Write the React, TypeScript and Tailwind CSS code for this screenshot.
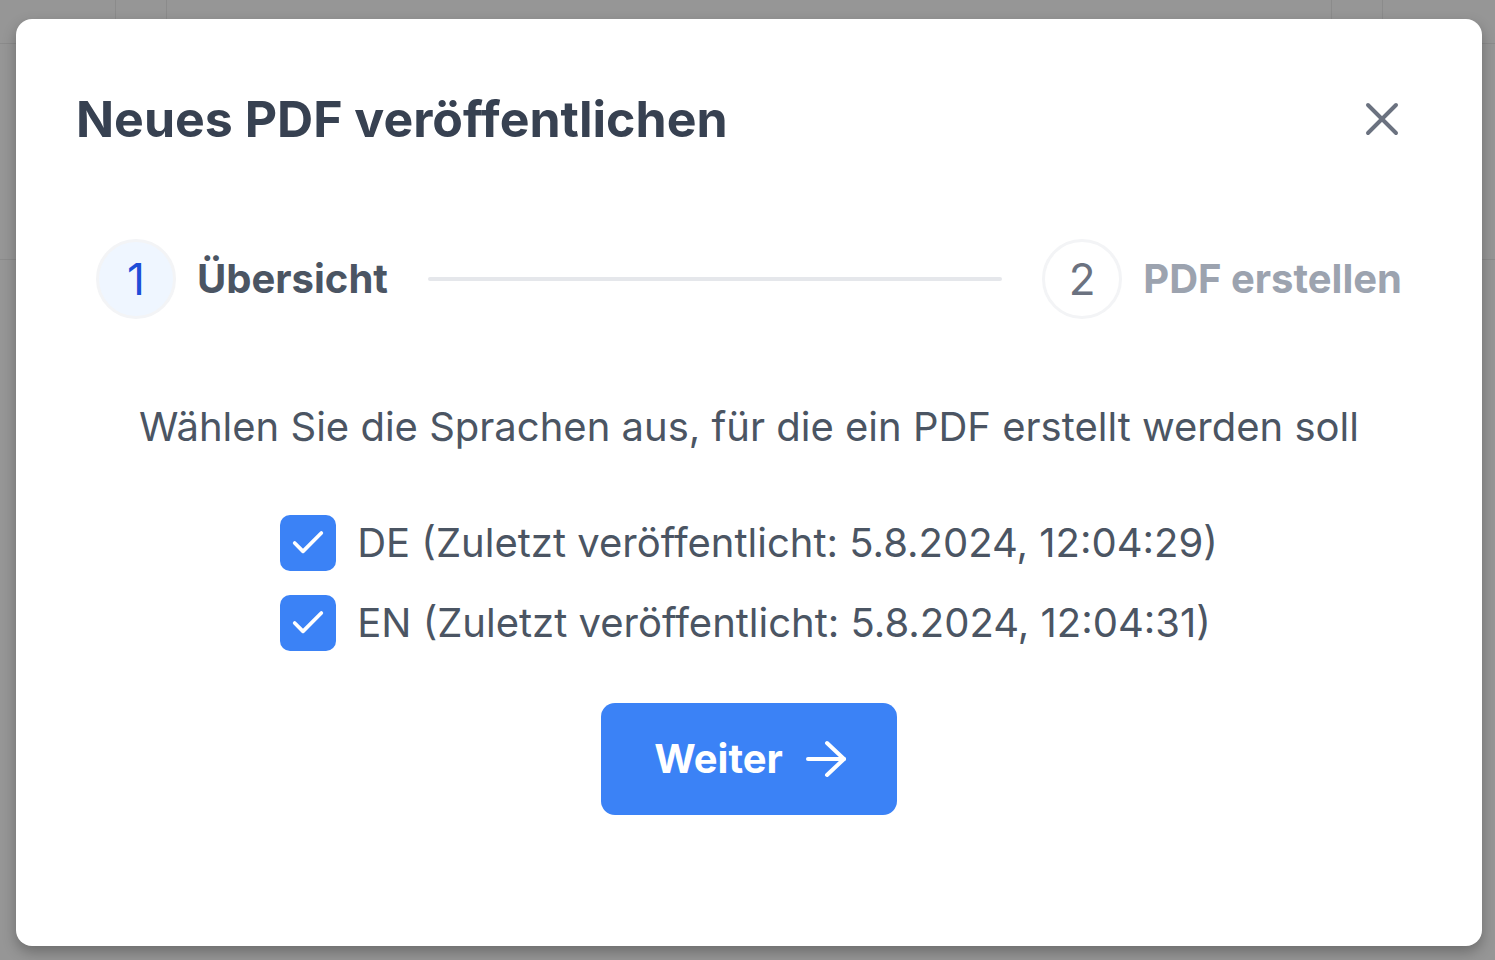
import React, { useState } from 'react';
import { X, Check } from 'lucide-react';

const languages = [
  { code: 'DE', published: '5.8.2024, 12:04:29' },
  { code: 'EN', published: '5.8.2024, 12:04:31' },
];

function Backdrop() {
  // page behind the dialog, dimmed
  return (
    <div className="fixed inset-0 flex flex-col bg-[#969696]">
      <div className="flex h-[44px] border-b border-[#8b8b8b]">
        <div className="w-[116px] border-r border-[#8b8b8b]" />
        <div className="w-[51px] border-r border-[#8b8b8b]" />
        <div className="flex-1 border-r border-[#8b8b8b]" />
        <div className="w-[51px] border-r border-[#8b8b8b]" />
        <div className="w-[112px]" />
      </div>
      <div className="h-[216px] border-b border-[#8b8b8b]" />
      <div className="flex-1" />
    </div>
  );
}

function Arrow() {
  return (
    <svg width="42" height="38" viewBox="0 0 42 38" fill="none" stroke="currentColor" strokeWidth="4" strokeLinecap="round" strokeLinejoin="round">
      <path d="M3 19h36" />
      <path d="M22 3l17 16-17 16" />
    </svg>
  );
}

export default function App() {
  const [selected, setSelected] = useState<string[]>(['DE', 'EN']);

  const toggle = (code: string) =>
    setSelected((s) => (s.includes(code) ? s.filter((c) => c !== code) : [...s, code]));

  return (
    <div className="h-screen w-full font-['Inter',sans-serif]">
      <Backdrop />

      {/* Dialog */}
      <div className="fixed inset-0 flex items-start pl-[16px] pt-[19px]">
        <div className="w-[1466px] rounded-2xl bg-white px-[60px] pt-[68px] pb-[131px] shadow-[0_6px_14px_rgba(0,0,0,0.28)]">
          <div className="flex h-[64px] items-center justify-between">
            <h2 className="text-[50px] font-bold leading-[64px] text-[#374151]">Neues PDF veröffentlichen</h2>
            <button className="mr-[12px] text-[#6b7280]">
              <X size={56} strokeWidth={1.7} />
            </button>
          </div>

          {/* Stepper */}
          <div className="mt-[88px] flex items-center px-[20px]">
            <div className="flex items-center gap-[21px]">
              <div className="flex h-[80px] w-[80px] items-center justify-center rounded-full border-[3px] border-[#f3f4f6] bg-[#eff6ff] text-[44px] text-[#1d4ed8]">
                1
              </div>
              <span className="text-[40px] font-bold text-[#4b5563]">Übersicht</span>
            </div>
            <div className="mx-[40px] h-[4px] flex-1 rounded-full bg-[#e5e7eb]" />
            <div className="flex items-center gap-[21px]">
              <div className="flex h-[80px] w-[80px] items-center justify-center rounded-full border-[3px] border-[#f3f4f6] bg-white text-[44px] text-[#6b7280]">
                2
              </div>
              <span className="text-[40px] font-bold text-[#9ca3af]">PDF erstellen</span>
            </div>
          </div>

          <p className="mt-[80px] text-center text-[40px] leading-[56px] text-[#4b5563]">
            Wählen Sie die Sprachen aus, für die ein PDF erstellt werden soll
          </p>

          <div className="mt-[60px] flex justify-center">
            <div className="flex flex-col gap-[24px]">
              {languages.map((lang) => {
                const checked = selected.includes(lang.code);
                return (
                  <label key={lang.code} className="flex cursor-pointer items-center gap-[21px]">
                    <span
                      onClick={() => toggle(lang.code)}
                      className={`flex h-[56px] w-[56px] items-center justify-center rounded-[10px] ${
                        checked ? 'bg-[#3b82f6]' : 'border-2 border-[#d1d5db] bg-white'
                      }`}
                    >
                      {checked && <Check size={40} strokeWidth={2.2} className="text-white" />}
                    </span>
                    <span className="text-[40px] leading-[56px] text-[#4b5563]">
                      {lang.code} (Zuletzt veröffentlicht: {lang.published})
                    </span>
                  </label>
                );
              })}
            </div>
          </div>

          <div className="mt-[52px] flex justify-center">
            <button className="flex h-[112px] items-center gap-[22px] rounded-[14px] bg-[#3b82f6] pl-[53px] pr-[50px] text-[40px] font-bold text-white">
              Weiter
              <Arrow />
            </button>
          </div>
        </div>
      </div>
    </div>
  );
}
